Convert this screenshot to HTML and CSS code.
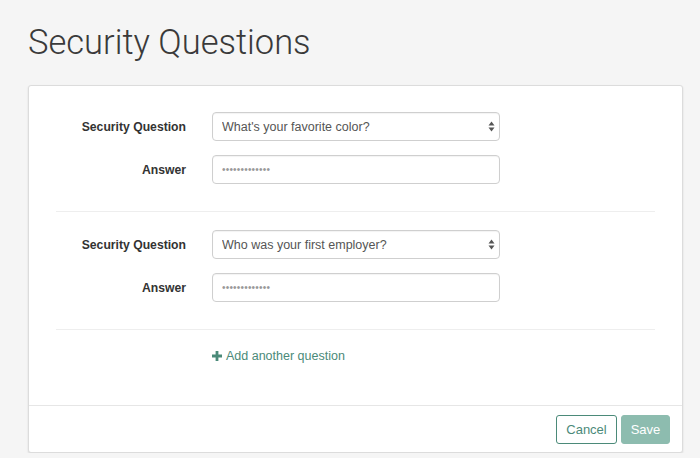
FILE: index.html
```html
<!DOCTYPE html>
<html lang="en">
<head>
    <meta charset="UTF-8">
    <meta name="viewport" content="width=device-width, initial-scale=1.0">
    <title>Security Questions</title>
    <link rel="stylesheet" href="styles.css">
</head>
<body>
    <h1 class="page-title">Security Questions</h1>

    <div class="card">
        <div class="card-body">
            <div class="question-group">
                <div class="form-row">
                    <label class="form-label">Security Question</label>
                    <div class="select-wrap">
                        <select class="form-control">
                            <option>What's your favorite color?</option>
                        </select>
                        <svg class="select-arrows" width="7" height="11" viewBox="0 0 7 11">
                            <path d="M3.5 0.5 L6.5 4.5 L0.5 4.5 Z M3.5 10.5 L6.5 6.5 L0.5 6.5 Z" fill="#555"/>
                        </svg>
                    </div>
                </div>
                <div class="form-row">
                    <label class="form-label">Answer</label>
                    <input class="form-control password" type="password" value="abcdefghijklm">
                </div>
            </div>

            <div class="question-group">
                <div class="form-row">
                    <label class="form-label">Security Question</label>
                    <div class="select-wrap">
                        <select class="form-control">
                            <option>Who was your first employer?</option>
                        </select>
                        <svg class="select-arrows" width="7" height="11" viewBox="0 0 7 11">
                            <path d="M3.5 0.5 L6.5 4.5 L0.5 4.5 Z M3.5 10.5 L6.5 6.5 L0.5 6.5 Z" fill="#555"/>
                        </svg>
                    </div>
                </div>
                <div class="form-row">
                    <label class="form-label">Answer</label>
                    <input class="form-control password" type="password" value="abcdefghijklm">
                </div>
            </div>

            <div class="add-row">
                <a class="add-link" href="#">
                    <svg width="10" height="10" viewBox="0 0 10 10">
                        <path d="M3.6 0 H6.4 V3.6 H10 V6.4 H6.4 V10 H3.6 V6.4 H0 V3.6 H3.6 Z" fill="currentColor"/>
                    </svg>
                    Add another question
                </a>
            </div>
        </div>

        <div class="card-footer">
            <button class="btn btn-cancel">Cancel</button>
            <button class="btn btn-save">Save</button>
        </div>
    </div>
</body>
</html>
```

FILE: styles.css
```css
body {
    margin: 0;
    padding: 0 17px 0 28px;
    background-color: #f5f5f5;
    font-family: "Liberation Sans", Arial, sans-serif;
    font-size: 13px;
    color: #333;
}

.page-title {
    margin: 0;
    padding: 22px 0 0;
    height: 63px;
    font-family: "Roboto", "Liberation Sans", sans-serif;
    font-weight: 300;
    font-size: 34.5px;
    line-height: 40px;
    color: #3a3a3a;
}

.card {
    background-color: #fff;
    border: 1px solid #dcdcdc;
    border-radius: 3px;
    box-shadow: 0 1px 2px rgba(0,0,0,0.12);
}

.card-body {
    padding: 26px 27px 0;
}

.question-group {
    padding-bottom: 27px;
    margin-bottom: 18px;
    border-bottom: 1px solid #eeeeee;
}

.form-row {
    display: flex;
    align-items: center;
    margin-bottom: 14px;
}

.form-row:last-child {
    margin-bottom: 0;
}

.form-label {
    width: 130px;
    margin-right: 26px;
    text-align: right;
    font-weight: bold;
    font-size: 12.2px;
    color: #333;
}

.select-wrap {
    position: relative;
    width: 288px;
}

.form-control {
    box-sizing: border-box;
    width: 288px;
    height: 29px;
    padding: 0 9px;
    border: 1px solid #cfcfcf;
    border-radius: 4px;
    background-color: #fff;
    box-shadow: inset 0 1px 1px rgba(0,0,0,0.05);
    font-family: "Liberation Sans", Arial, sans-serif;
    font-size: 12.5px;
    color: #555;
    outline: none;
}

select.form-control {
    -webkit-appearance: none;
    appearance: none;
    display: block;
}

.select-arrows {
    position: absolute;
    right: 5px;
    top: 9px;
    pointer-events: none;
}

.password {
    font-size: 10px;
    color: #999;
    letter-spacing: 0.2px;
}

.add-row {
    padding: 0 0 40px 156px;
    line-height: 16px;
}

.add-link {
    display: inline-flex;
    align-items: center;
    gap: 4px;
    color: #4b8a79;
    text-decoration: none;
    font-size: 12.5px;
}

.card-footer {
    display: flex;
    justify-content: flex-end;
    gap: 4px;
    padding: 9px 12px 8px;
    border-top: 1px solid #e6e6e6;
}

.btn {
    height: 29px;
    border-radius: 3px;
    font-family: "Liberation Sans", Arial, sans-serif;
    font-size: 13px;
    cursor: pointer;
}

.btn-cancel {
    width: 61px;
    background-color: #fff;
    border: 1px solid #4b8a79;
    color: #4b8a79;
}

.btn-save {
    width: 49px;
    background-color: #8dbcaf;
    border: 1px solid #8dbcaf;
    color: #fff;
}
```
